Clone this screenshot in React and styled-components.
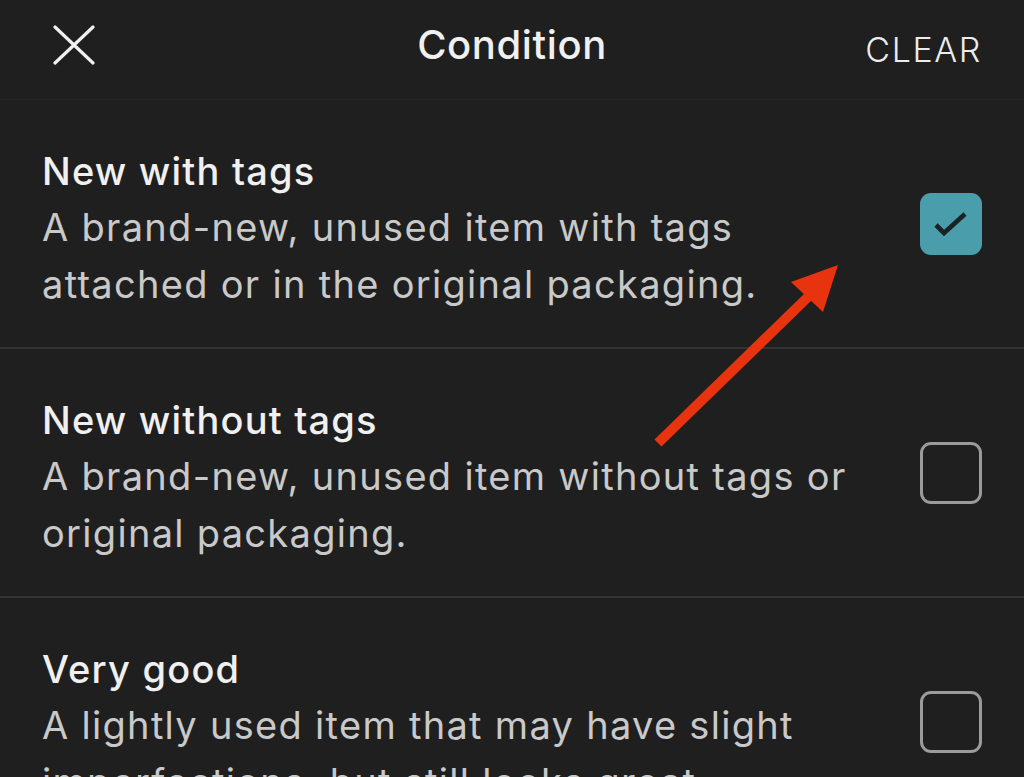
import React from "react";
import styled, { createGlobalStyle } from "styled-components";

const GlobalStyle = createGlobalStyle`
  html, body {
    margin: 0;
    padding: 0;
    background-color: #1f1f1f;
  }
  body {
    font-family: Inter, "Noto Sans", "Liberation Sans", sans-serif;
    color: #f0f0f0;
    overflow: hidden;
  }
`;

const OPTIONS = [
  {
    title: "New with tags",
    description:
      "A brand-new, unused item with tags attached or in the original packaging.",
    checked: true,
  },
  {
    title: "New without tags",
    description:
      "A brand-new, unused item without tags or original packaging.",
    checked: false,
  },
  {
    title: "Very good",
    description:
      "A lightly used item that may have slight imperfections, but still looks great.",
    checked: false,
  },
];

const App = () => {
  return (
    <>
      <GlobalStyle />
      <Screen>
        <Header>
          <CloseButton aria-label="Close">
            <svg width="44" height="40" viewBox="0 0 44 40" fill="none">
              <path
                d="M3 2 L41 38 M41 2 L3 38"
                stroke="#f0f0f0"
                strokeWidth="3.2"
                strokeLinecap="round"
              />
            </svg>
          </CloseButton>
          <Title>Condition</Title>
          <ClearButton>CLEAR</ClearButton>
        </Header>
        <List>
          {OPTIONS.map((option) => (
            <Row key={option.title}>
              <Text>
                <OptionTitle>{option.title}</OptionTitle>
                <Description>{option.description}</Description>
              </Text>
              <Checkbox $checked={option.checked}>
                {option.checked && (
                  <svg width="40" height="32" viewBox="0 0 40 32" fill="none">
                    <path
                      d="M5 17 L13 25 L34 6"
                      stroke="#1b2224"
                      strokeWidth="4.6"
                      strokeLinecap="butt"
                      strokeLinejoin="miter"
                    />
                  </svg>
                )}
              </Checkbox>
            </Row>
          ))}
        </List>
        <Arrow width="200" height="200" viewBox="0 0 200 200" fill="none">
          <path d="M8 188 L160 40" stroke="#e8330f" strokeWidth="10" />
          <path d="M188 10 L141 27 L173 57 Z" fill="#e8330f" />
        </Arrow>
      </Screen>
    </>
  );
};

const Screen = styled.div`
  position: relative;
  width: 1024px;
  height: 777px;
  overflow: hidden;
  background-color: #1f1f1f;
`;

const Header = styled.header`
  height: 100px;
  padding: 0 42px;
  box-sizing: border-box;
  border-bottom: 1px solid #252525;

  display: grid;
  grid-template-columns: 1fr auto 1fr;
  align-items: center;
`;

const Button = styled.button`
  border: 0;
  padding: 0;
  background-color: transparent;
  cursor: pointer;
  font-family: inherit;
`;

const CloseButton = styled(Button)`
  justify-self: start;
  display: flex;
  margin: -10px 0 0 10px;
`;

const Title = styled.h1`
  margin: 0 0 10px 0;
  font-size: 40px;
  font-weight: 500;
  letter-spacing: 0.6px;
  color: #f0f0f0;
`;

const ClearButton = styled(Button)`
  justify-self: end;
  font-size: 34px;
  font-weight: 300;
  letter-spacing: 1.6px;
  color: #ececec;
`;

const List = styled.div`
  display: flex;
  flex-direction: column;
`;

const Row = styled.section`
  height: 249px;
  padding: 0 42px;
  box-sizing: border-box;
  border-bottom: 2px solid #333333;

  display: flex;
  align-items: center;
  gap: 40px;
`;

const Text = styled.div`
  flex: 1;
  margin-top: 8px;
`;

const OptionTitle = styled.h2`
  margin: 0;
  font-size: 38px;
  font-weight: 500;
  letter-spacing: 1.2px;
  line-height: 56px;
  color: #f0f0f0;
`;

const Description = styled.p`
  margin: 0;
  max-width: 830px;
  font-size: 38px;
  font-weight: 400;
  letter-spacing: 1.3px;
  line-height: 57px;
  color: #c9c9c9;
`;

const Checkbox = styled.span`
  flex: none;
  width: 62px;
  height: 62px;
  box-sizing: border-box;
  border-radius: 11px;
  border: ${(p) => (p.$checked ? "0" : "3px solid #9b9b9b")};
  background-color: ${(p) => (p.$checked ? "#4a9dab" : "transparent")};

  display: flex;
  align-items: center;
  justify-content: center;
`;

const Arrow = styled.svg`
  position: absolute;
  left: 650px;
  top: 255px;
  pointer-events: none;
`;

export default App;
